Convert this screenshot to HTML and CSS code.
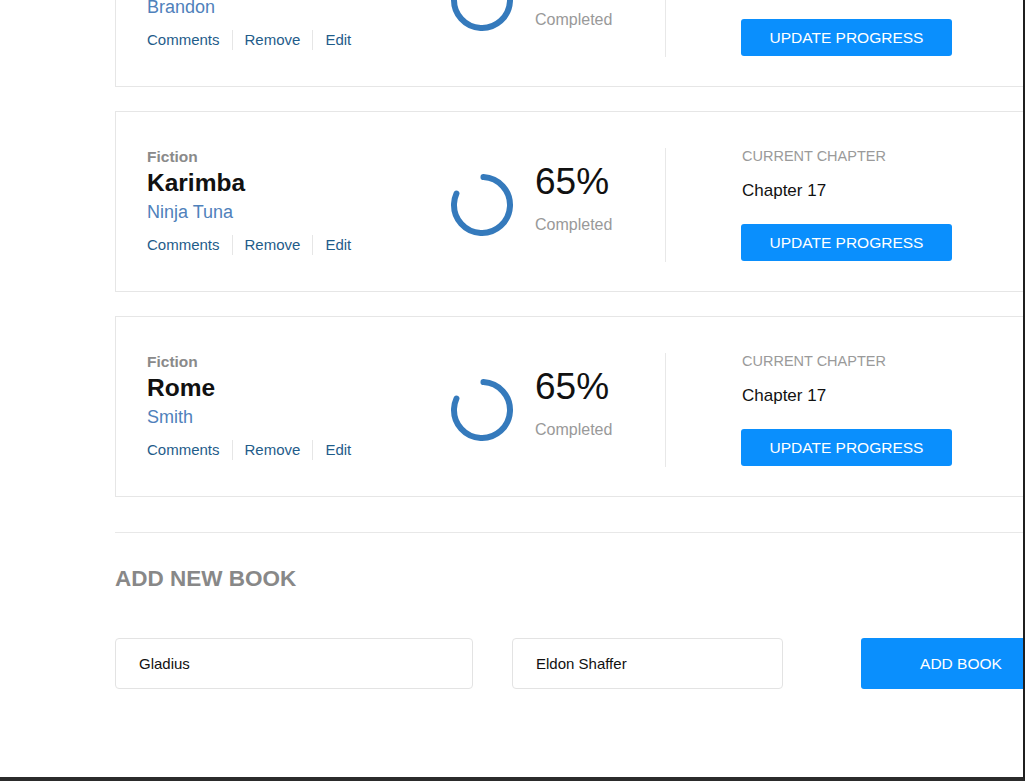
FILE: index.html
```html
<!DOCTYPE html>
<html>
<head>
<meta charset="utf-8">
<link rel="stylesheet" href="styles.css">
</head>
<body>
<div class="viewport">
  <div class="page">
    <div class="book-list">
      <div class="card">
        <div class="info">
          <div class="genre">Fiction</div>
          <div class="title">Legend</div>
          <div class="author">Brandon</div>
          <div class="links"><a>Comments</a><a>Remove</a><a>Edit</a></div>
        </div>
        <div class="progress">
          <svg class="ring" width="64" height="64" viewBox="0 0 64 64"><circle cx="32" cy="32" r="28" transform="rotate(-87 32 32)"/></svg>
          <div class="pct"><div class="num">65%</div><div class="done">Completed</div></div>
        </div>
        <div class="chapter">
          <div class="label">CURRENT CHAPTER</div>
          <div class="ch">Chapter 17</div>
          <button class="btn">UPDATE PROGRESS</button>
        </div>
      </div>
      <div class="card">
        <div class="info">
          <div class="genre">Fiction</div>
          <div class="title">Karimba</div>
          <div class="author">Ninja Tuna</div>
          <div class="links"><a>Comments</a><a>Remove</a><a>Edit</a></div>
        </div>
        <div class="progress">
          <svg class="ring" width="64" height="64" viewBox="0 0 64 64"><circle cx="32" cy="32" r="28" transform="rotate(-87 32 32)"/></svg>
          <div class="pct"><div class="num">65%</div><div class="done">Completed</div></div>
        </div>
        <div class="chapter">
          <div class="label">CURRENT CHAPTER</div>
          <div class="ch">Chapter 17</div>
          <button class="btn">UPDATE PROGRESS</button>
        </div>
      </div>
      <div class="card">
        <div class="info">
          <div class="genre">Fiction</div>
          <div class="title">Rome</div>
          <div class="author">Smith</div>
          <div class="links"><a>Comments</a><a>Remove</a><a>Edit</a></div>
        </div>
        <div class="progress">
          <svg class="ring" width="64" height="64" viewBox="0 0 64 64"><circle cx="32" cy="32" r="28" transform="rotate(-87 32 32)"/></svg>
          <div class="pct"><div class="num">65%</div><div class="done">Completed</div></div>
        </div>
        <div class="chapter">
          <div class="label">CURRENT CHAPTER</div>
          <div class="ch">Chapter 17</div>
          <button class="btn">UPDATE PROGRESS</button>
        </div>
      </div>
    </div>
    <div class="add-section">
      <h2 class="add-title">ADD NEW BOOK</h2>
      <div class="add-row">
        <div class="field f-title">Gladius</div>
        <div class="field f-author">Eldon Shaffer</div>
        <button class="add-btn">ADD BOOK</button>
      </div>
    </div>
  </div>
</div>
</body>
</html>
```
FILE: styles.css
```css
html, body {
  margin: 0;
  padding: 0;
  background: #fff;
}
body {
  font-family: "Liberation Sans", Arial, sans-serif;
}
.viewport {
  width: 1025px;
  height: 781px;
  box-sizing: border-box;
  border-right: 2px solid #1f1f1f;
  border-bottom: 4px solid #2b2b2b;
  overflow: hidden;
}
.page {
  margin-left: 115px;
  width: 960px;
  margin-top: -94px;
}
.book-list {
  display: flex;
  flex-direction: column;
  gap: 24px;
}
.card {
  height: 181px;
  box-sizing: border-box;
  border: 1px solid #e6e6e6;
  display: flex;
  padding: 36px 0 29px 31px;
}
.info {
  width: 303px;
}
.genre {
  font-size: 15.5px;
  font-weight: bold;
  color: #8a8a8a;
  line-height: 18px;
}
.title {
  font-size: 24.5px;
  font-weight: bold;
  color: #111;
  line-height: 34px;
}
.author {
  font-size: 18px;
  color: #4f81bb;
  line-height: 25px;
}
.links {
  margin-top: 10px;
  display: flex;
  line-height: 20px;
  font-size: 15px;
}
.links a {
  color: #1f5c8a;
  padding: 0 12px;
  border-left: 1px solid #e6e6e6;
}
.links a:first-child {
  padding-left: 0;
  border-left: none;
}
.progress {
  width: 215px;
  border-right: 1px solid #e8e8e8;
  display: flex;
  align-items: flex-start;
}
.ring {
  margin-top: 25px;
  display: block;
}
.ring circle {
  fill: none;
  stroke: #357abc;
  stroke-width: 6;
  stroke-linecap: round;
  stroke-dasharray: 142 200;
}
.pct {
  margin-left: 21px;
  margin-top: 13px;
}
.num {
  font-size: 37px;
  line-height: 42px;
  color: #111;
}
.done {
  margin-top: 12px;
  font-size: 16px;
  line-height: 20px;
  color: #999;
}
.chapter {
  padding-left: 75px;
}
.label {
  margin-left: 1px;
  font-size: 14.5px;
  line-height: 16px;
  color: #9a9a9a;
}
.ch {
  margin-left: 1px;
  margin-top: 16px;
  font-size: 17px;
  line-height: 22px;
  color: #111;
}
.btn {
  margin-top: 22px;
  width: 211px;
  height: 37px;
  border: none;
  border-radius: 3px;
  background: #0a8ffd;
  color: #fff;
  font-family: "Liberation Sans", Arial, sans-serif;
  font-size: 15.5px;
  display: block;
  padding: 0;
}
.add-section {
  margin-top: 35px;
  border-top: 1px solid #e8e8e8;
}
.add-title {
  margin: 33px 0 0;
  font-size: 22.5px;
  line-height: 26px;
  font-weight: bold;
  color: #888;
}
.add-row {
  margin-top: 46px;
  display: flex;
}
.field {
  height: 51px;
  box-sizing: border-box;
  border: 1px solid #e3e3e3;
  border-radius: 4px;
  padding-left: 23px;
  display: flex;
  align-items: center;
  font-size: 15px;
  color: #111;
}
.f-title {
  width: 358px;
}
.f-author {
  width: 271px;
  margin-left: 39px;
}
.add-btn {
  margin-left: 78px;
  width: 200px;
  height: 51px;
  border: none;
  border-radius: 3px;
  background: #0a8ffd;
  color: #fff;
  font-family: "Liberation Sans", Arial, sans-serif;
  font-size: 15.5px;
  padding: 0;
}
```
